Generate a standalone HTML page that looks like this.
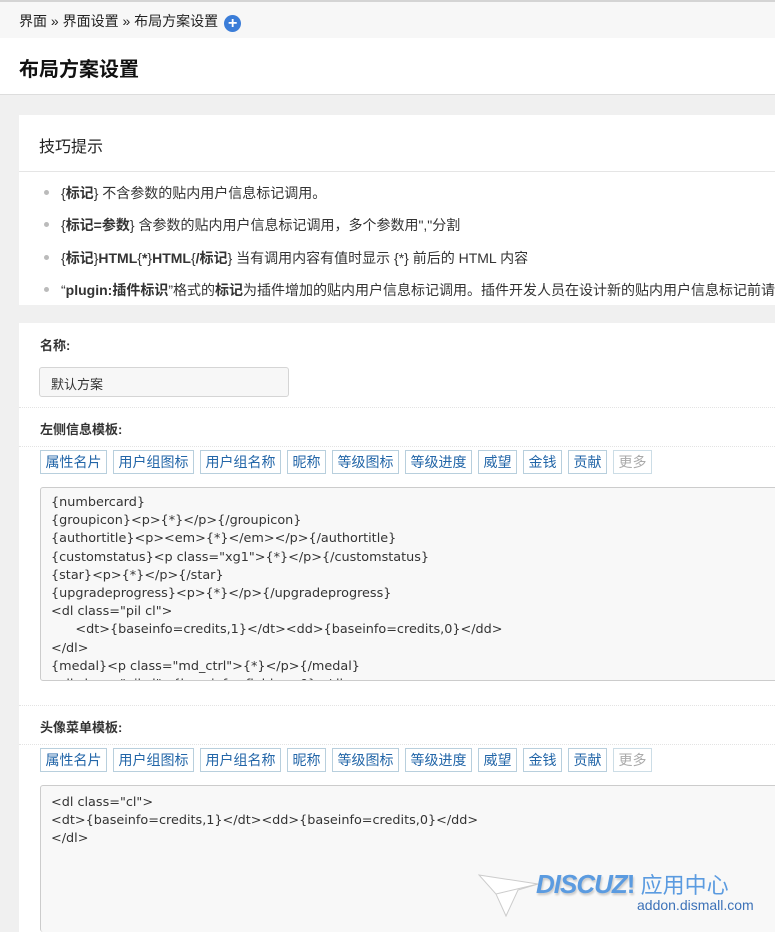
<!DOCTYPE html>
<html><head><meta charset="utf-8"><style>
*{margin:0;padding:0;box-sizing:border-box}
html,body{width:775px;height:932px;overflow:hidden}
body{background:#f0f0f0;font-family:"Liberation Sans","Noto Sans CJK SC",sans-serif;color:#333;font-size:13px;position:relative}
.a{position:absolute}
.top{left:0;top:0;width:775px;height:38px;background:#f7f7f7;border-top:2px solid #d4d4d4;box-shadow:0 1px 3px rgba(0,0,0,.15);font-size:14px;color:#222;padding:9px 0 0 19px;white-space:nowrap}
.plus{display:inline-block;width:17px;height:17px;border-radius:50%;background:#3b7dd8;color:#fff;font-weight:bold;text-align:center;line-height:17px;font-size:16px;vertical-align:-2px;margin-left:6px}
.hd{left:0;top:38px;width:775px;height:57px;background:#fff;border-bottom:1px solid #ddd;font-size:20px;font-weight:bold;color:#111;padding:15px 0 0 19px}
.card{left:19px;width:756px;background:#fff}
.tip{position:absolute;left:61px;white-space:nowrap;font-size:14px;color:#333}
.tip:before{content:"";position:absolute;left:-17px;top:7px;width:5px;height:5px;border-radius:50%;background:#bbb}
.lbl{left:40px;font-weight:bold;font-size:13px;color:#333}
.dot{left:19px;width:756px;border-top:1px dotted #e3e3e3}
.btns{left:40px;white-space:nowrap;font-size:0}
.btns span{display:inline-block;height:24px;line-height:22px;padding:0 4.5px;border:1px solid #b8cfdd;color:#2366a8;font-size:14px;margin-right:6px}
.btns span.g{color:#aaa;border-color:#ccdde6}
.ta{left:40px;width:740px;background:#f8f8f8;border:1px solid #ccc;border-radius:3px;padding:6px 0 0 10px;font-family:"DejaVu Sans",sans-serif;font-size:12.8px;line-height:18.2px;white-space:pre;overflow:hidden;color:#333}
</style></head><body>
<div class="a top">界面 » 界面设置 » 布局方案设置<span class="plus">+</span></div>
<div class="a hd">布局方案设置</div>
<div class="a card" style="top:115px;height:190px">
<div style="height:57px;border-bottom:1px solid #e5e5e5;font-size:16px;padding:18px 0 0 20px;color:#222">技巧提示</div>
</div>
<div class="tip" style="top:183px">{<b>标记</b>} 不含参数的贴内用户信息标记调用。</div>
<div class="tip" style="top:215px">{<b>标记=参数</b>} 含参数的贴内用户信息标记调用，多个参数用","分割</div>
<div class="tip" style="top:248px">{<b>标记</b>}<b>HTML</b>{<b>*</b>}<b>HTML</b>{<b>/标记</b>} 当有调用内容有值时显示 {*} 前后的 HTML 内容</div>
<div class="tip" style="top:280px">“<b>plugin:插件标识</b>”格式的<b>标记</b>为插件增加的贴内用户信息标记调用。插件开发人员在设计新的贴内用户信息标记前请</div>
<div class="a card" style="top:323px;height:609px"></div>
<div class="a lbl" style="top:335px">名称:</div>
<div class="a" style="left:39px;top:367px;width:250px;height:30px;background:#f7f7f7;border:1px solid #d5d5d5;border-radius:3px;padding:6px 0 0 11px;font-size:13px">默认方案</div>
<div class="a dot" style="top:407px"></div>
<div class="a lbl" style="top:419px">左侧信息模板:</div>
<div class="a dot" style="top:446px"></div>
<div class="a btns" style="top:450px"><span>属性名片</span><span>用户组图标</span><span>用户组名称</span><span>昵称</span><span>等级图标</span><span>等级进度</span><span>威望</span><span>金钱</span><span>贡献</span><span class="g">更多</span></div>
<div class="a ta" style="top:487px;height:194px">{numbercard}
{groupicon}&lt;p&gt;{*}&lt;/p&gt;{/groupicon}
{authortitle}&lt;p&gt;&lt;em&gt;{*}&lt;/em&gt;&lt;/p&gt;{/authortitle}
{customstatus}&lt;p class="xg1"&gt;{*}&lt;/p&gt;{/customstatus}
{star}&lt;p&gt;{*}&lt;/p&gt;{/star}
{upgradeprogress}&lt;p&gt;{*}&lt;/p&gt;{/upgradeprogress}
&lt;dl class="pil cl"&gt;
      &lt;dt&gt;{baseinfo=credits,1}&lt;/dt&gt;&lt;dd&gt;{baseinfo=credits,0}&lt;/dd&gt;
&lt;/dl&gt;
{medal}&lt;p class="md_ctrl"&gt;{*}&lt;/p&gt;{/medal}
&lt;dl class="pil cl"&gt;{baseinfo=field_qq,0}&lt;/dl&gt;</div>
<div class="a dot" style="top:705px"></div>
<div class="a lbl" style="top:717px">头像菜单模板:</div>
<div class="a dot" style="top:744px"></div>
<div class="a btns" style="top:748px"><span>属性名片</span><span>用户组图标</span><span>用户组名称</span><span>昵称</span><span>等级图标</span><span>等级进度</span><span>威望</span><span>金钱</span><span>贡献</span><span class="g">更多</span></div>
<div class="a ta" style="top:785px;height:147px;padding-top:8px;border-bottom:none">&lt;dl class="cl"&gt;
&lt;dt&gt;{baseinfo=credits,1}&lt;/dt&gt;&lt;dd&gt;{baseinfo=credits,0}&lt;/dd&gt;
&lt;/dl&gt;</div>
<svg class="a" style="left:478px;top:872px" width="62" height="46" viewBox="0 0 62 46"><path d="M1 3 L60 12 L40 18 L28 44 L18 22 Z" fill="#fff" stroke="#ccc"/><path d="M18 22 L60 12" stroke="#ccc"/></svg>
<div class="a" style="left:536px;top:868px;font-size:26px;font-style:italic;font-weight:bold;color:#5b9be0;white-space:nowrap;letter-spacing:-1px;text-shadow:1px 2px 2px rgba(0,0,0,.2)">DISCUZ<span style="font-style:normal">!</span><span style="font-style:normal;font-weight:normal;font-size:22px;letter-spacing:0;text-shadow:none"> 应用中心</span></div>
<div class="a" style="left:637px;top:897px;font-size:14px;color:#3d72b8">addon.dismall.com</div>
</body></html>
